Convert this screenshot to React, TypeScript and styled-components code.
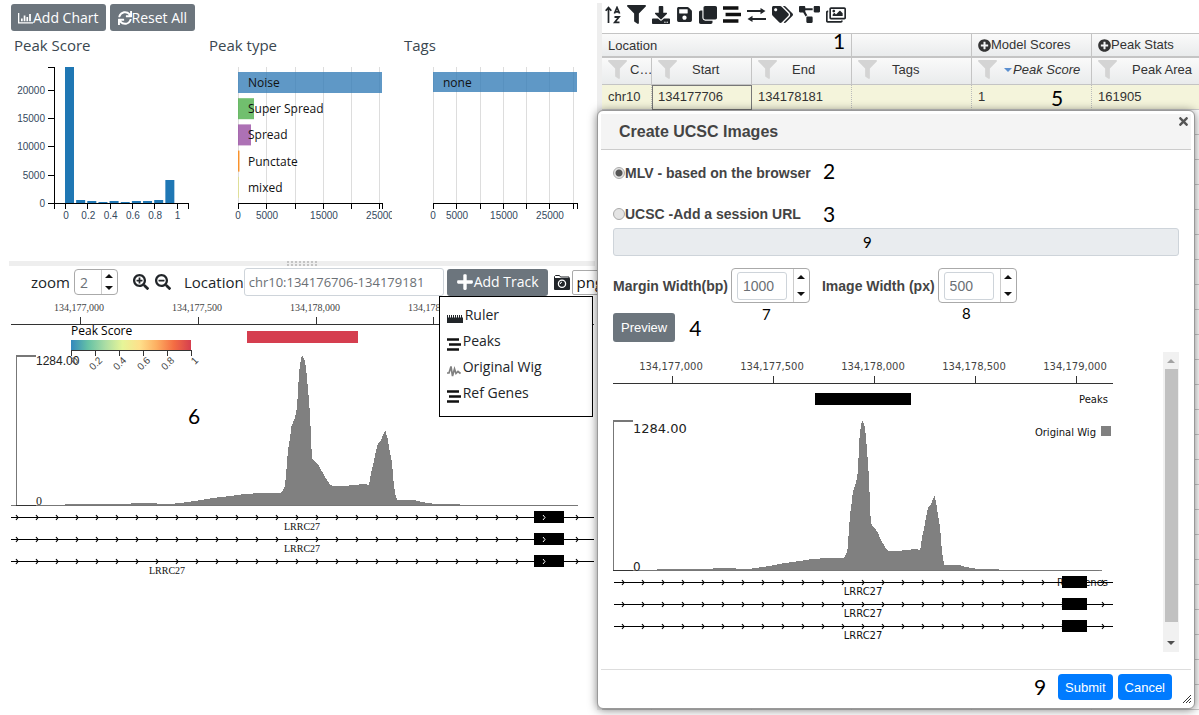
import React from "react";
import styled, { createGlobalStyle } from "styled-components";
import {
  FaClone,
  FaDownload,
  FaFilter,
  FaPlus,
  FaPlusCircle,
  FaProjectDiagram,
  FaRegImages,
  FaSave,
  FaSearchMinus,
  FaSearchPlus,
  FaTags,
  FaTimes,
} from "react-icons/fa";

const UI = '"Open Sans", "Noto Sans", sans-serif';
const ARIAL = '"Liberation Sans", Arial, sans-serif';
const SERIF = '"Liberation Serif", "Times New Roman", serif';
const DEJAVU = '"DejaVu Sans", Verdana, sans-serif';

const GlobalStyle = createGlobalStyle`
  *, *::before, *::after { box-sizing: border-box; }
  body {
    margin: 0;
    background: #fff;
    color: #212529;
    font-family: ${UI};
    font-size: 15px;
  }
  button, input, select { font: inherit; margin: 0; }
  svg { display: block; flex: none; }
`;

/* ---------- page frame ---------- */

const Page = styled.div`
  display: grid;
  grid-template-columns: minmax(0, 597fr) minmax(0, 602fr);
  min-height: 100vh;
  overflow: hidden;
`;

const LeftPane = styled.main`
  padding: 4px 2px 0 9px;
  min-width: 0;
  overflow: hidden;
`;

const RightPane = styled.section`
  position: relative;
  min-width: 0;
  padding-top: 3px;
`;

const GridPane = styled.div`
  border-left: 5px solid #eee;
  overflow: hidden;
`;

/* ---------- shared controls ---------- */

const ButtonRow = styled.div`
  display: flex;
  gap: 4px;
  padding-left: 2px;
`;

const GreyButton = styled.button<{ $pad?: number; $height?: number }>`
  display: flex;
  align-items: center;
  height: ${(p) => p.$height ?? 27}px;
  padding: 0 ${(p) => p.$pad ?? 8}px;
  border: 0;
  border-radius: 3px;
  background: #6c757d;
  color: #fff;
  font-size: 14px;
  line-height: 20px;
  white-space: nowrap;
`;

const BlueButton = styled.button`
  height: 26px;
  padding: 0 7px;
  border: 0;
  border-radius: 4px;
  background: #007bff;
  color: #fff;
  font-family: ${ARIAL};
  font-size: 13px;
`;

const SpinnerBox = styled.span<{ $height: number; $pad: number }>`
  display: inline-flex;
  flex: none;
  align-items: stretch;
  height: ${(p) => p.$height}px;
  border: 1px solid #aaa;
  border-radius: 4px;
  background: #fff;
  padding-left: ${(p) => p.$pad}px;
`;

const SpinnerInput = styled.input<{ $width: number; $framed?: boolean }>`
  width: ${(p) => p.$width}px;
  height: ${(p) => (p.$framed ? "28px" : "auto")};
  align-self: ${(p) => (p.$framed ? "center" : "stretch")};
  margin-right: ${(p) => (p.$framed ? 6 : 0)}px;
  padding: 0 5px;
  border: ${(p) => (p.$framed ? "1px solid #ced4da" : "0")};
  border-radius: 3px;
  background: transparent;
  color: #6b7075;
  font-size: 14px;
  font-weight: 400;
  font-family: ${(p) => (p.$framed ? ARIAL : UI)};
  outline: 0;
`;

const Arrows = styled.span`
  display: flex;
  flex-direction: column;
  justify-content: space-around;
  width: 16px;
  border-left: 1px solid #ccc;
`;

const ArrowButton = styled.button<{ $down?: boolean }>`
  display: flex;
  align-items: center;
  justify-content: center;
  height: 10px;
  padding: 0;
  border: 0;
  background: transparent;
  &::before {
    content: "";
    border: 4px solid transparent;
    border-top: ${(p) => (p.$down ? "4px solid #111" : "0")};
    border-bottom: ${(p) => (p.$down ? "0" : "4px solid #111")};
  }
`;

const Note = styled.span<{ $small?: boolean }>`
  color: #000;
  font-family: Lato, sans-serif;
  font-weight: 400;
  font-size: ${(p) => (p.$small ? 15 : 21)}px;
  line-height: ${(p) => (p.$small ? 16 : 24)}px;
`;

const PinnedNote = styled(Note)<{ $x: number; $y: number }>`
  position: absolute;
  left: ${(p) => p.$x}px;
  top: ${(p) => p.$y}px;
`;

/* ---------- charts ---------- */

const ChartRow = styled.div`
  display: flex;
  margin-top: 4px;
`;

const ChartCard = styled.figure`
  flex: 0 0 195px;
  margin: 0;
`;

const ChartTitle = styled.figcaption`
  padding: 0 0 1px 5px;
  font-size: 15px;
  line-height: 21px;
  color: #3a4750;
`;

const ChartSvg = styled.svg`
  overflow: hidden;
  .axis { stroke: #000; fill: none; shape-rendering: crispEdges; }
  .grid { stroke: #ddd; shape-rendering: crispEdges; }
  .tick { font: 10px ${ARIAL}; fill: #34495e; }
  .label { font: 12px ${UI}; fill: #111; }
`;

const HIST = [136, 3, 2, 1, 2, 1, 2, 2, 3, 23];

function Histogram() {
  const base = 146;
  return (
    <ChartSvg width="188" height="204" role="img" aria-label="Peak Score histogram">
      {HIST.map((h, i) => (
        <rect key={i} x={56 + i * 11.15} y={base - h} width="9" height={h} fill="#1f77b4" />
      ))}
      <path className="axis" d="M39 10.5H45.5V146.5H39M39 33.5H45M39 61.5H45M39 89.5H45M39 118.5H45" />
      <path className="axis" d="M45.5 152V146.5H179.5V152M56.5 146V152M78.5 146V152M101.5 146V152M123.5 146V152M145.5 146V152M168.5 146V152" />
      {["20000", "15000", "10000", "5000", "0"].map((t, i) => (
        <text key={t} className="tick" x="36" y={37 + i * 28.2} textAnchor="end">{t}</text>
      ))}
      {["0", "0.2", "0.4", "0.6", "0.8", "1"].map((t, i) => (
        <text key={t} className="tick" x={57 + i * 22.3} y="162" textAnchor="middle">{t}</text>
      ))}
    </ChartSvg>
  );
}

type Bar = { name: string; width: number; fill: string };

function BarChart(props: { title: string; bars: Bar[]; ticks: number[]; labels: [number, string][]; origin: number; barHeight: number }) {
  const o = props.origin;
  return (
    <ChartSvg width="188" height="204" role="img" aria-label={props.title}>
      {props.ticks.map((t) => (
        <path key={t} className="grid" d={`M${o + t + 0.5} 10V146`} />
      ))}
      {props.bars.map((b, i) => (
        <g key={b.name}>
          <rect x={o} y={15 + i * 26.2} width={b.width} height={props.barHeight} fill={b.fill} fillOpacity="0.8" />
          <text className="label" x={o + 10} y={30 + i * 26.2}>{b.name}</text>
        </g>
      ))}
      <path className="axis" d={`M${o + 0.5} 152V146.5H${o + 144.5}V152${props.ticks.map((t) => `M${o + t + 0.5} 146V152`).join("")}`} />
      {props.labels.map(([x, t]) => (
        <text key={t} className="tick" x={o + x} y="162" textAnchor="middle">{t}</text>
      ))}
    </ChartSvg>
  );
}

/* ---------- genome tracks ---------- */

// [offset along the axis, height above the base line]
const WIG: [number, number][] = [
  [0, 0.5], [34, 1], [49, 1.5], [102, 2], [127, 3], [154, 2], [164, 3], [179, 5], [197, 8], [214, 10],
  [229, 12], [246, 13], [264, 13], [266, 14], [269, 20], [271, 43], [272, 56], [274, 68], [275.5, 80],
  [279, 88], [281, 98], [283, 133], [285, 148], [286.5, 150], [289, 145], [290.5, 133], [292.5, 111],
  [294, 92], [295.5, 57], [296.5, 47], [303, 40], [308.5, 30], [314.5, 21], [318, 19.5], [329, 20],
  [336, 21], [349, 22], [353, 21], [355, 33], [357.5, 43], [360, 55], [362, 63], [365, 66], [367.5, 72],
  [369.5, 75], [371.5, 68], [373.5, 56], [376, 43], [377.5, 25], [379, 13], [381, 6], [391, 6.5],
  [400, 5.5], [406, 4], [419, 2], [444, 1.5], [490, 1.5], [562, 1],
];

const wigPath = (x0: number, base: number, scale: number) =>
  `M${x0} ${base}` + WIG.map(([x, h]) => `L${x0 + x * scale} ${base - h}`).join("") + `L${x0 + 562 * scale} ${base}Z`;

const chevrons = (from: number, to: number, y: number) => {
  let d = "";
  for (let x = from; x < to; x += 20) d += `M${x} ${y - 2.5}L${x + 2} ${y}L${x} ${y + 2.5}`;
  return d;
};

const TrackSvg = styled.svg<{ $face: string; $valueFace: string; $valueSize: number }>`
  overflow: hidden;
  .small { font: 10px ${(p) => p.$face}; fill: #111; }
  .ruler { font: 10px ${(p) => p.$face}; fill: #444; }
  .value { font: ${(p) => p.$valueSize}px ${(p) => p.$valueFace}; fill: #222; }
  .zero { font: 12px ${(p) => p.$face}; fill: #222; }
  .tick { font: 10px ${ARIAL}; fill: #444; }
  .legend { font: 12px ${UI}; fill: #000; }
  .line { stroke: #333; fill: none; shape-rendering: crispEdges; }
  .scale { stroke: #777; fill: none; shape-rendering: crispEdges; }
  .gene { stroke: #000; fill: none; shape-rendering: crispEdges; }
  .arrow { stroke: #000; stroke-width: 1.2; fill: none; }
`;

const GENES = [219.5, 241.5, 263.5];
const SPECTRAL = ["#3288bd", "#66c2a5", "#abdda4", "#e6f598", "#fee08b", "#fdae61", "#f46d43", "#d53e4f"];

function BrowserTracks() {
  return (
    <TrackSvg width="583" height="290" $face={SERIF} $valueFace={ARIAL} $valueSize={12} role="img" aria-label="Genome browser">
      <path className="line" d="M0 26.5H583M69.5 19V26M187.5 19V26M305.5 19V26M422.5 19V26" />
      {["134,177,000", "134,177,500", "134,178,000", "134,178,500"].map((t, i) => (
        <text key={t} className="ruler" x={68 + i * 118} y="13" textAnchor="middle">{t}</text>
      ))}
      <rect x="236" y="33" width="111" height="12" fill="#d53e4f" />
      <path d={wigPath(5, 208, 1)} fill="#808080" shapeRendering="crispEdges" />
      <path className="scale" d="M0 207.5H567M5.5 58V207" />
      <path className="scale" strokeWidth="2" d="M5 58H25" />
      <path className="line" d="M5 207.5H25" />
      <text className="value" x="25" y="67">1284.00</text>
      <text className="zero" x="25" y="207">0</text>
      <defs>
        <linearGradient id="score">
          {SPECTRAL.map((c, i) => <stop key={c} offset={i / 7} stopColor={c} />)}
        </linearGradient>
      </defs>
      <text className="legend" x="60" y="37">Peak Score</text>
      <rect x="60" y="42" width="120" height="10" fill="url(#score)" />
      <path className="line" d="M60.5 58V52.5H180.5V58M84.5 52V58M108.5 52V58M132.5 52V58M156.5 52V58" />
      {["0", "0.2", "0.4", "0.6", "0.8", "1"].map((t, i) => (
        <text key={t} className="tick" textAnchor="end" transform={`translate(${68 + i * 24} 63) rotate(-45)`}>{t}</text>
      ))}
      {GENES.map((y, i) => (
        <g key={y}>
          <path className="gene" d={`M0 ${y}H583`} />
          <path className="arrow" d={chevrons(5, 583, y)} />
          <rect x="523" y={y - 6.5} width="30" height="12" fill="#000" />
          <path d={`M532 ${y - 2.5}L534 ${y}L532 ${y + 2.5}`} stroke="#fff" fill="none" />
          <text className="small" x={i === 2 ? 156 : 291} y={y + 12} textAnchor="middle">LRRC27</text>
        </g>
      ))}
    </TrackSvg>
  );
}

function PreviewTracks() {
  return (
    <TrackSvg width="500" height="300" $face={DEJAVU} $valueFace={DEJAVU} $valueSize={13} role="img" aria-label="Image preview">
      <path className="line" d="M0 31.5H500M59.5 24V31M160.5 24V31M261.5 24V31M362.5 24V31M463.5 24V31" />
      {["134,177,000", "134,177,500", "134,178,000", "134,178,500", "134,179,000"].map((t, i) => (
        <text key={t} className="ruler" x={58 + i * 101} y="18" textAnchor="middle">{t}</text>
      ))}
      <rect x="202" y="41" width="96" height="12" />
      <text className="small" x="495" y="51" textAnchor="end">Peaks</text>
      <text className="small" x="483" y="84" textAnchor="end">Original Wig</text>
      <rect x="488" y="74" width="10" height="10" fill="#808080" />
      <path d={wigPath(1, 219, 0.8675)} fill="#808080" shapeRendering="crispEdges" />
      <path className="scale" d="M0 218.5H486M0.5 69V218" />
      <path className="scale" strokeWidth="2" d="M0 69H20" />
      <path className="line" d="M0 218.5H20" />
      <text className="value" x="20" y="81">1284.00</text>
      <text className="zero" x="20" y="219">0</text>
      <text className="small" x="495" y="234" textAnchor="end">Ref Genes</text>
      {GENES.map((g) => {
        const y = g + 11;
        return (
          <g key={y}>
            <path className="gene" d={`M1 ${y}H500`} />
            <path className="arrow" d={chevrons(9, 500, y)} />
            <rect x="449" y={y - 6.5} width="25" height="12" />
            <text className="small" x="250" y={y + 12} textAnchor="middle">LRRC27</text>
          </g>
        );
      })}
    </TrackSvg>
  );
}

/* ---------- browser tool bar ---------- */

const Splitter = styled.div`
  display: flex;
  justify-content: center;
  height: 5px;
  background: #eee;
`;

const Grip = styled.span`
  width: 31px;
  background:
    linear-gradient(#eee, #eee) 0 2px / 100% 1px no-repeat,
    repeating-linear-gradient(90deg, #c4c4c4 0 2px, transparent 2px 4px);
`;

const BrowserBar = styled.div`
  display: flex;
  align-items: center;
  height: 28px;
  margin: 2px 0 2px 22px;
`;

const BarLabel = styled.label`
  font-size: 15px;
  line-height: 20px;
  color: #212529;
`;

const ZoomLabel = styled(BarLabel)`
  margin-right: 4px;
`;

const ZoomButtons = styled.div`
  display: flex;
  gap: 6px;
  margin: 0 13px 0 15px;
`;

const IconButton = styled.button`
  display: flex;
  padding: 0;
  border: 0;
  background: transparent;
  color: #212529;
`;

const LocationInput = styled.input`
  flex: none;
  width: 200px;
  height: 28px;
  padding: 0 4px;
  border: 1px solid #ced4da;
  border-radius: 3px;
  color: #6b7075;
  font-size: 13px;
`;

const TrackMenuAnchor = styled.div`
  position: relative;
  margin: 0 6px 0 3px;
`;

const TrackMenu = styled.ul`
  position: absolute;
  z-index: 1;
  top: 27px;
  left: -8px;
  width: 154px;
  height: 121px;
  margin: 0;
  padding: 5px 7px;
  border: 1px solid #000;
  background: #fff;
  list-style: none;
`;

const TrackMenuItem = styled.li`
  display: flex;
  align-items: center;
  gap: 2px;
  height: 26px;
  font-size: 14px;
`;

const MenuIcon = styled.span`
  padding-top: 8px;
`;

const FormatSelect = styled.select`
  appearance: none;
  flex: none;
  width: 60px;
  height: 25px;
  margin-left: 2px;
  padding: 0 4px;
  border: 1px solid #aaa;
  border-radius: 2px;
  background: #fff;
  color: #111;
`;

const BrowserArea = styled.div`
  position: relative;
  padding-left: 2px;
  overflow: hidden;
`;

const BarChartIcon = () => (
  <svg width="15" height="12" viewBox="0 0 15 12" fill="currentColor">
    <path d="M0 1h1.3v9.2H15v1.3H0zM3 6.5h1.7V9.3H3zM5.7 3.5h1.7v5.8H5.7zM8.4 5h1.7v4.3H8.4zM11.1 2h1.8v7.3h-1.8z" />
  </svg>
);

const RefreshIcon = () => (
  <svg width="14" height="14" viewBox="0 0 512 512" fill="currentColor">
    <path d="M440.65 12.57l4 82.77A247.16 247.16 0 0 0 255.83 8C134.73 8 33.91 94.92 12.29 209.82A12 12 0 0 0 24.09 224h49.05a12 12 0 0 0 11.67-9.26 175.91 175.91 0 0 1 317-56.94l-101.46-4.86a12 12 0 0 0-12.57 12v47.41a12 12 0 0 0 12 12H500a12 12 0 0 0 12-12V12a12 12 0 0 0-12-12h-47.37a12 12 0 0 0-11.98 12.57zM255.83 432a175.61 175.61 0 0 1-146-77.8l101.8 4.87a12 12 0 0 0 12.57-12v-47.4a12 12 0 0 0-12-12H12a12 12 0 0 0-12 12V500a12 12 0 0 0 12 12h47.35a12 12 0 0 0 12-12.6l-4.15-82.57A247.17 247.17 0 0 0 255.83 504c121.11 0 221.93-86.92 243.55-201.82a12 12 0 0 0-11.8-14.18h-49.05a12 12 0 0 0-11.67 9.26A175.86 175.86 0 0 1 255.83 432z" />
  </svg>
);

const CameraIcon = () => (
  <svg width="16" height="15" viewBox="0 0 16 15">
    <path d="M1.5 .5h4l1 1.5H15v2H.5V1.5z" fill="#fff" stroke="#212529" />
    <rect y="3" width="16" height="12" rx="1" fill="#212529" />
    <circle cx="8" cy="8.8" r="3.6" fill="none" stroke="#fff" strokeWidth="1.3" />
    <path d="M6.3 9A1.8 1.8 0 0 1 8 7.1" fill="none" stroke="#fff" />
  </svg>
);

const LinesIcon = ({ width = 14, height = 13 }: { width?: number; height?: number }) => (
  <svg width={width} height={height} viewBox="0 0 14 13" preserveAspectRatio="none">
    <path d="M0 1.5H12M2 6.5H14M0 11.5H12" stroke="#111" strokeWidth="2.6" />
  </svg>
);

const RulerIcon = () => (
  <svg width="16" height="8" viewBox="0 0 16 8">
    <path d="M0 0h1v2.5h1V0h1v2.5h1V0h1v2.5h1V0h1v2.5h1V0h1v2.5h1V0h1v2.5h1V0h1v2.5h1V0h1v2.5h1V8H0z" fill="#212529" />
  </svg>
);

const WaveIcon = () => (
  <svg width="14" height="12" viewBox="0 0 14 12">
    <path d="M0 8H2L4 1.5L5.5 11L7.5 4L9 8.5L11 6.5L13.5 8.5" fill="none" stroke="#808080" strokeWidth="1.7" />
  </svg>
);

function Stepper(props: { label: string; value: string; id: string; big?: boolean }) {
  return (
    <SpinnerBox $height={props.big ? 35 : 26} $pad={props.big ? 5 : 0}>
      <SpinnerInput id={props.id} defaultValue={props.value} inputMode="numeric" $width={props.big ? 50 : 26} $framed={props.big} />
      <Arrows>
        <ArrowButton type="button" aria-label={`Increase ${props.label}`} />
        <ArrowButton type="button" aria-label={`Decrease ${props.label}`} $down />
      </Arrows>
    </SpinnerBox>
  );
}

/* ---------- data grid ---------- */

const IconBar = styled.div`
  display: flex;
  align-items: center;
  gap: 6px;
  height: 30px;
  padding: 0 0 7px 3px;
`;

const DataTable = styled.table`
  width: 100%;
  min-width: 622px;
  table-layout: fixed;
  border-collapse: separate;
  border-spacing: 0;
  font-family: ${ARIAL};
  font-size: 13px;
  color: #333;
`;

const HeadCell = styled.th<{ $height: number; $tight?: boolean }>`
  height: ${(p) => p.$height}px;
  padding: 0 ${(p) => (p.$tight ? 0 : 6)}px ${(p) => (p.$height > 24 ? 3 : 0)}px 6px;
  border-top: 1px solid #c4c4c4;
  border-right: 1px solid #c4c4c4;
  border-bottom: 1px solid #c4c4c4;
  background: linear-gradient(#fafafa, #e9ebec);
  font-weight: 400;
  text-align: left;
`;

const HeadContent = styled.span<{ $gap?: number; $italic?: boolean }>`
  display: flex;
  align-items: center;
  gap: ${(p) => p.$gap ?? 0}px;
  overflow: hidden;
  white-space: nowrap;
  line-height: 20px;
  font-style: ${(p) => (p.$italic ? "italic" : "normal")};
`;

const Ellipsis = styled.span`
  overflow: hidden;
  text-overflow: ellipsis;
`;

const DataCell = styled.td<{ $lit?: boolean; $active?: boolean }>`
  height: 25px;
  padding: ${(p) => (p.$active ? "0 5px 2px" : "0 6px 1px")};
  border: ${(p) => (p.$active ? "1px solid #777" : "0 solid transparent")};
  ${(p) => (p.$active ? "" : "border-right: 1px dotted #bbb; border-bottom: 1px solid #ccc;")}
  background: ${(p) => (p.$lit ? "#f4f4db" : "#fff")};
`;

const SortMark = styled.span`
  margin-right: -6px;
  border: 4px solid transparent;
  border-top-color: #5b8fd0;
  border-bottom: 0;
`;

const SortIcon = () => (
  <svg width="16" height="18" viewBox="0 0 16 18" fill="none" stroke="#212529">
    <path d="M3.5 17V2M.7 4.8L3.5 1.6L6.3 4.8" strokeWidth="1.7" />
    <path d="M9.4 7.5L12 1.5L14.6 7.5M10.5 5.8H13.5" strokeWidth="1.7" />
    <path d="M9.5 11H14L9.8 16.3H14.5" strokeWidth="1.8" />
  </svg>
);

const SwapIcon = () => (
  <svg width="19" height="14" viewBox="0 0 19 14">
    <path d="M0 3H14M5 11H19" stroke="#212529" strokeWidth="2" />
    <path d="M13.5 0L18.5 3L13.5 6.3zM5.5 7.8L.5 11L5.5 14z" fill="#212529" />
  </svg>
);

const COLUMNS = ["Start", "End", "Tags"];

const Funnel = () => <FaFilter size={19} color="#d4d4d4" />;

function DataGrid() {
  return (
    <GridPane>
      <IconBar>
        <IconButton aria-label="Sort"><SortIcon /></IconButton>
        <IconButton aria-label="Filter"><FaFilter size={19} /></IconButton>
        <IconButton aria-label="Download"><FaDownload size={18} /></IconButton>
        <IconButton aria-label="Save"><FaSave size={17} /></IconButton>
        <IconButton aria-label="Clone"><FaClone size={18} /></IconButton>
        <IconButton aria-label="Align"><LinesIcon width={18} height={17} /></IconButton>
        <IconButton aria-label="Swap"><SwapIcon /></IconButton>
        <IconButton aria-label="Tags"><FaTags size={21} /></IconButton>
        <IconButton aria-label="Cluster"><FaProjectDiagram size={21} /></IconButton>
        <IconButton aria-label="Images"><FaRegImages size={20} /></IconButton>
      </IconBar>
      <DataTable>
        <colgroup>
          <col width="50" />
          <col width="100" />
          <col width="100" />
          <col width="120" />
          <col width="120" />
          <col />
        </colgroup>
        <thead>
          <tr>
            <HeadCell $height={24} colSpan={3}>Location</HeadCell>
            <HeadCell $height={24} />
            <HeadCell $height={24}><HeadContent><FaPlusCircle size={13} />Model Scores</HeadContent></HeadCell>
            <HeadCell $height={24}><HeadContent><FaPlusCircle size={13} />Peak Stats</HeadContent></HeadCell>
          </tr>
          <tr>
            <HeadCell $height={28} $tight><HeadContent $gap={3}><Funnel /><Ellipsis>Chromosome</Ellipsis></HeadContent></HeadCell>
            {COLUMNS.map((c) => (
              <HeadCell key={c} $height={28}><HeadContent $gap={15}><Funnel />{c}</HeadContent></HeadCell>
            ))}
            <HeadCell $height={28}><HeadContent $gap={7} $italic><Funnel /><SortMark />Peak Score</HeadContent></HeadCell>
            <HeadCell $height={28}><HeadContent $gap={15}><Funnel />Peak Area</HeadContent></HeadCell>
          </tr>
        </thead>
        <tbody>
          <tr>
            {["chr10", "134177706", "134178181", "", "1", "161905"].map((v, i) => (
              <DataCell key={i} $lit $active={i === 1}>{v}</DataCell>
            ))}
          </tr>
          {Array.from({ length: 24 }, (_, r) => (
            <tr key={r}>{Array.from({ length: 6 }, (_, i) => <DataCell key={i} />)}</tr>
          ))}
        </tbody>
      </DataTable>
    </GridPane>
  );
}

/* ---------- dialog ---------- */

const Dialog = styled.div`
  position: absolute;
  z-index: 2;
  top: 110px;
  left: 0;
  right: 4px;
  padding: 3px;
  border: 1px solid #999;
  border-radius: 6px;
  background: #fff;
  box-shadow: 0 1px 10px rgba(0, 0, 0, 0.5);
  color: #444;
  font-family: ${ARIAL};
  font-size: 14px;
`;

const DialogHead = styled.header`
  display: flex;
  justify-content: space-between;
  height: 36px;
  padding: 0 1px 0 18px;
  border-bottom: 1px solid #ccc;
  background: #f4f4f4;
`;

const DialogTitle = styled.h2`
  margin: 0;
  font-size: 16px;
  line-height: 36px;
`;

const CloseButton = styled(IconButton)`
  height: 16px;
  padding-top: 1px;
  color: #555;
  stroke: #555;
  stroke-width: 40px;
`;

const DialogBody = styled.form`
  padding: 11px 12px 0;
`;

const RadioRow = styled.div`
  position: relative;
  display: flex;
  align-items: center;
  height: 24px;
  & + & { margin-top: 17px; }
`;

const RadioLabel = styled.label`
  display: flex;
  align-items: center;
  font-weight: 700;
  white-space: nowrap;
`;

const Radio = styled.input`
  appearance: none;
  width: 12px;
  height: 12px;
  border: 1px solid #aaa;
  border-radius: 50%;
  background: #e4e4e4;
  &:checked { background: radial-gradient(circle, #555 0 3px, #e4e4e4 4px); }
`;

const UrlWrap = styled.div`
  position: relative;
  margin-top: 2px;
`;

const UrlInput = styled.input`
  display: block;
  width: 100%;
  height: 28px;
  border: 1px solid #ced4da;
  border-radius: 3px;
  background: #e9ecef;
`;

const SizeRow = styled.div`
  display: flex;
  align-items: center;
  gap: 12px;
  margin-top: 12px;
`;

const SizeField = styled.div`
  position: relative;
  display: flex;
  align-items: center;
  gap: 3px;
  font-weight: 700;
  white-space: nowrap;
`;

const PreviewRow = styled.div`
  display: flex;
  align-items: center;
  gap: 14px;
  margin: 10px 0;
`;

const PreviewButton = styled(GreyButton)`
  font-family: ${ARIAL};
  font-size: 13px;
`;

const PreviewArea = styled.div`
  display: flex;
  justify-content: space-between;
`;

const ScrollTrack = styled.div`
  display: flex;
  flex-direction: column;
  align-items: center;
  width: 16px;
  background: #f1f1f1;
`;

const ScrollThumb = styled.span`
  width: 13px;
  height: 253px;
  background: #c1c1c1;
`;

const ScrollArrow = styled.span<{ $down?: boolean }>`
  margin: ${(p) => (p.$down ? "19px 0 0" : "7px 0 6px")};
  border: 4px solid transparent;
  border-top: ${(p) => (p.$down ? "4px solid #505050" : "0")};
  border-bottom: ${(p) => (p.$down ? "0" : "4px solid #a3a3a3")};
`;

const DialogFoot = styled.footer`
  display: flex;
  align-items: center;
  justify-content: flex-end;
  gap: 5px;
  margin-top: 17px;
  padding: 4px 19px 5px 0;
  border-top: 1px solid #ddd;
`;

const FootNote = styled(Note)`
  margin-right: 7px;
`;

const ResizeGrip = styled.svg`
  position: absolute;
  right: 3px;
  bottom: 5px;
`;

function UcscDialog() {
  return (
    <Dialog role="dialog" aria-labelledby="dialog-title">
      <DialogHead>
        <DialogTitle id="dialog-title">Create UCSC Images</DialogTitle>
        <CloseButton aria-label="Close"><FaTimes size={13} /></CloseButton>
      </DialogHead>
      <DialogBody>
        <RadioRow>
          <RadioLabel><Radio type="radio" name="source" defaultChecked />MLV - based on the browser</RadioLabel>
          <PinnedNote $x={210} $y={-2}>2</PinnedNote>
        </RadioRow>
        <RadioRow>
          <RadioLabel><Radio type="radio" name="source" />UCSC -Add a session URL</RadioLabel>
          <PinnedNote $x={210} $y={0}>3</PinnedNote>
        </RadioRow>
        <UrlWrap>
          <UrlInput type="text" disabled aria-label="Session URL" />
          <PinnedNote $small $x={250} $y={6}>9</PinnedNote>
        </UrlWrap>
        <SizeRow>
          <SizeField>
            <label htmlFor="margin">Margin Width(bp)</label>
            <Stepper id="margin" label="margin width" value="1000" big />
            <PinnedNote $small $x={149} $y={38}>7</PinnedNote>
          </SizeField>
          <SizeField>
            <label htmlFor="image">Image Width (px)</label>
            <Stepper id="image" label="image width" value="500" big />
            <PinnedNote $small $x={140} $y={37}>8</PinnedNote>
          </SizeField>
        </SizeRow>
        <PreviewRow>
          <PreviewButton type="button" $height={29}>Preview</PreviewButton>
          <Note>4</Note>
        </PreviewRow>
        <PreviewArea>
          <PreviewTracks />
          <ScrollTrack aria-hidden="true">
            <ScrollArrow />
            <ScrollThumb />
            <ScrollArrow $down />
          </ScrollTrack>
        </PreviewArea>
      </DialogBody>
      <DialogFoot>
        <FootNote>9</FootNote>
        <BlueButton>Submit</BlueButton>
        <BlueButton>Cancel</BlueButton>
      </DialogFoot>
      <ResizeGrip width="8" height="8" viewBox="0 0 8 8">
        <path d="M0 8L8 0M3 8L8 3M6 8L8 6" stroke="#333" />
      </ResizeGrip>
    </Dialog>
  );
}

/* ---------- page ---------- */

const PEAK_TYPES: Bar[] = [
  { name: "Noise", width: 144, fill: "#377eb8" },
  { name: "Super Spread", width: 16, fill: "#4daf4a" },
  { name: "Spread", width: 13, fill: "#984ea3" },
  { name: "Punctate", width: 1.5, fill: "#ff7f00" },
  { name: "mixed", width: 0.5, fill: "#e5e533" },
];

export default function App() {
  return (
    <Page>
      <GlobalStyle />
      <LeftPane>
        <ButtonRow>
          <GreyButton $pad={7}><BarChartIcon />Add Chart</GreyButton>
          <GreyButton $pad={8}><RefreshIcon />Reset All</GreyButton>
        </ButtonRow>
        <ChartRow>
          <ChartCard>
            <ChartTitle>Peak Score</ChartTitle>
            <Histogram />
          </ChartCard>
          <ChartCard>
            <ChartTitle>Peak type</ChartTitle>
            <BarChart
              title="Peak type"
              origin={34}
              barHeight={21}
              bars={PEAK_TYPES}
              ticks={[0, 28, 57, 85, 113, 141]}
              labels={[[0, "0"], [29, "5000"], [86, "15000"], [142, "25000"]]}
            />
          </ChartCard>
          <ChartCard>
            <ChartTitle>Tags</ChartTitle>
            <BarChart
              title="Tags"
              origin={34}
              barHeight={20}
              bars={[{ name: "none", width: 144, fill: "#377eb8" }]}
              ticks={[0, 23, 47, 70, 93, 116, 140]}
              labels={[[0, "0"], [24, "5000"], [71, "15000"], [117, "25000"]]}
            />
          </ChartCard>
        </ChartRow>
        <Splitter><Grip /></Splitter>
        <BrowserBar>
          <ZoomLabel htmlFor="zoom">zoom</ZoomLabel>
          <Stepper id="zoom" label="zoom" value="2" />
          <ZoomButtons>
            <IconButton aria-label="Zoom in"><FaSearchPlus size={16} /></IconButton>
            <IconButton aria-label="Zoom out"><FaSearchMinus size={16} /></IconButton>
          </ZoomButtons>
          <BarLabel htmlFor="location">Location</BarLabel>
          <LocationInput id="location" defaultValue="chr10:134176706-134179181" />
          <TrackMenuAnchor>
            <GreyButton $pad={9}><FaPlus size={18} />Add Track</GreyButton>
            <TrackMenu>
              <TrackMenuItem><MenuIcon><RulerIcon /></MenuIcon>Ruler</TrackMenuItem>
              <TrackMenuItem><MenuIcon><LinesIcon /></MenuIcon>Peaks</TrackMenuItem>
              <TrackMenuItem><MenuIcon><WaveIcon /></MenuIcon>Original Wig</TrackMenuItem>
              <TrackMenuItem><MenuIcon><LinesIcon /></MenuIcon>Ref Genes</TrackMenuItem>
            </TrackMenu>
          </TrackMenuAnchor>
          <IconButton aria-label="Snapshot"><CameraIcon /></IconButton>
          <FormatSelect aria-label="Image format"><option>png</option></FormatSelect>
        </BrowserBar>
        <BrowserArea>
          <BrowserTracks />
          <PinnedNote $x={179} $y={106}>6</PinnedNote>
        </BrowserArea>
      </LeftPane>
      <RightPane>
        <DataGrid />
        <PinnedNote $x={236} $y={29}>1</PinnedNote>
        <PinnedNote $x={454} $y={86}>5</PinnedNote>
        <UcscDialog />
      </RightPane>
    </Page>
  );
}
